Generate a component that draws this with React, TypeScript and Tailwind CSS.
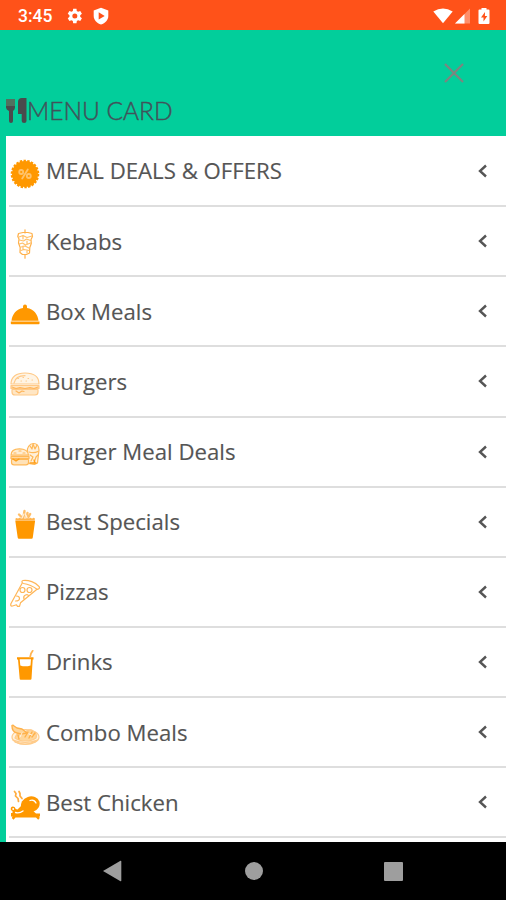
import type { ReactNode } from 'react'

type IconProps = { children: ReactNode }

function MenuIcon({ children }: IconProps) {
  return (
    <svg className="mt-[5px] h-[30px] w-[30px] shrink-0 text-[#ff9800]" viewBox="0 0 30 30" fill="none" stroke="currentColor" strokeWidth="1.2" strokeLinecap="round" strokeLinejoin="round">
      {children}
    </svg>
  )
}

function OffersIcon() {
  return (
    <MenuIcon>
      <circle cx="15" cy="15" r="13" fill="currentColor" stroke="none" />
      <circle cx="15" cy="15" r="13.2" strokeWidth="2.200" strokeLinecap="butt" strokeDasharray="2.4 1.37" />
      <g stroke="#ffc36b" strokeWidth="1.8">
        <circle cx="11.2" cy="13" r="2" />
        <circle cx="18.8" cy="17" r="2" />
        <path d="M17.8 10.500 12.200 19.500" />
      </g>
    </MenuIcon>
  )
}

function KebabIcon() {
  return (
    <MenuIcon>
      <path stroke="#ffb04a" d="M15 .8V4M8.5 4.5 13 3.5h5l4 1 .5 3-1.5 3 .3 4-1.5 4-.3 5.5-3 1.500h-4l-2.500-2 .2-5L8.500 14l.5-4L7.800 7.500zM15 26v3.200" />
      <path stroke="#ffc06a" d="m9 8 4-1.500 4 2 5-1.500M9.500 11l4 1 3-2 4 1.500M9.500 15l3-1 3 2 5-2M11 18l4-1 4 2M11 21.500l3-1 5 1M13 7v3m4 2v3m-4 2v3m4 1v3" />
    </MenuIcon>
  )
}

function BoxIcon() {
  return (
    <MenuIcon>
      <path fill="currentColor" stroke="none" d="M1.500 21.800c.6-6.500 5-11.700 11.500-12.800V7.400a2 2 0 1 1 4 0V9c6.500 1.100 11 6.300 11.500 12.800zM.8 22.500h28.700v2q0 .7-.8.700H1.600q-.8 0-.8-.7z" />
    </MenuIcon>
  )
}

function BurgerIcon() {
  return (
    <MenuIcon>
      <g stroke="#ffc987">
        <path fill="#fff4e4" d="M1 15C1 7.500 6.500 4 15 4s14 3.500 14 11z" />
        <path fill="#ffe6c4" d="M1 16.500h28v3H1zM2 20.500h26v2.500q0 3-3 3H5q-3 0-3-3z" />
        <path d="M4 14.200c1-5 5-7.500 11-7.500M8 9.500h.5M13 8.500h.5M18 9.500h.5M22 11h.5M11 12h.5M16 12h.5" />
        <path stroke="#ffb55a" d="m2 18 4 1.500 4-1 5 1 5-1 4 1 4-1.500M6 22l3 2 3-2 2 .5" />
      </g>
    </MenuIcon>
  )
}

function BurgerDealIcon() {
  return (
    <MenuIcon>
      <g stroke="#ffb857">
        <path fill="#fff0db" d="M17.500 13c-1-4 2-8.500 6-8.500 3.500 0 5.500 3 5.500 6.500l-1.500 13-3 1.500-6-1" />
        <path fill="#ffedd2" d="M1 16.200C1 12 4.500 9.800 9.500 9.800s9 2.200 9 6.400z" />
        <path fill="#ffd79f" d="M1 17.500h18v2H1z" />
        <path fill="#ffe2b8" d="M1.500 20.500h17v3q0 2.300-2.500 2.300H4q-2.500 0-2.500-2.300z" />
        <path d="m20 7 2 3 1-5 2 5 2-4M19 13c3 1 6 1 9-.5M20 16l3 2-2 4m3 2 2-6 2-2M4 14h2m3-2h2m2 2h2" />
        <path stroke="#ff9f18" strokeWidth="1.300" d="m3 20 3 2 3-2M20 24h6m-2-3 1 3" />
      </g>
    </MenuIcon>
  )
}

function SpecialsIcon() {
  return (
    <MenuIcon>
      <path fill="currentColor" stroke="none" d="M5.300 11.800h19.800l-2.300 16.700q-.1 1.200-1.300 1.200H9q-1.200 0-1.300-1.200z" />
      <path fill="#ffb44f" stroke="none" d="M5.500 9.500q1.500-1 2.500.2 1.500-1.800 3-.2 2-1.500 4 .2 2-1.700 4-.2 1.700-1.500 3 .2 1.500-1.500 2.800-.5v2.500H5.500z" />
      <path stroke="#ffbe69" strokeWidth="2.400" d="m11.500 8-2.500-2.500m4.500 2.500 1-6m2 6 1-4M18.500 8l1.700-3" />
      <path stroke="#fff0da" d="m12 9 2-4m3 4-1-3" />
    </MenuIcon>
  )
}

function PizzaIcon() {
  return (
    <MenuIcon>
      <g stroke="#ffb658">
        <path d="M13 1.500c5-.8 13 1.800 16.200 6.200.7 1.500-.4 3-2.200 2.500-4-3-8.500-5-13.500-5.700-2-.5-2-2.500-.5-3z" />
        <path d="M12 4.500 1 24.500q-1 3 1.500 2.500l4-1.200 1 1.500h2l1-3.500L27 10.300" />
        <circle cx="12.500" cy="11" r="2.500" />
        <circle cx="19.500" cy="11" r="2.500" />
        <path d="M6.500 17q3 0 3 2.500t-4 2.500M14 20q-1-3 1.500-4t3 1" />
      </g>
    </MenuIcon>
  )
}

function DrinkIcon() {
  return (
    <MenuIcon>
      <path fill="currentColor" stroke="none" fillRule="evenodd" d="M7 7.300h16.500V9.500h-.8L21.500 28.700q-.1 1-1 1H10.700q-1 0-1-1L8 9.500H7zm2.700 2 .6 6.200q5 1.700 10.200 0l.5-6.200z" />
      <path stroke="#ffb34f" strokeWidth="1.700" d="m20 7.500 1-4L22.700.8" />
    </MenuIcon>
  )
}

function ComboIcon() {
  return (
    <MenuIcon>
      <g stroke="#ffcb8a">
        <ellipse cx="15.500" cy="17" rx="13.500" ry="7.500" fill="#fff2df" />
        <path d="M3 20q12 5 24.500 0M5 22q10 4.500 21-.5" />
        <path fill="#ffd69b" d="M5 18c2-6 6-7 9-5 3-3 7-4 9-2 3 1 4 4 3 7-5 4-16 4-21 0z" />
        <path fill="#ffd69b" stroke="#ffb14a" strokeWidth="1.400" d="M2 5.500q1-1 2 .5l3 2 5 1 5 4-6 1-4-1Q2 12 2 6z" />
        <path stroke="#ffb14a" strokeWidth="1.400" d="m18 12-3 5m7-5-3 6m6-5-3 4M8 15l1 4" />
        <path stroke="#fff" strokeWidth=".8" d="m12 13-2 4m9-3 3 1" />
      </g>
    </MenuIcon>
  )
}

function ChickenIcon() {
  return (
    <MenuIcon>
      <ellipse cx="20.300" cy="14.500" rx="9.500" ry="8" transform="rotate(-18 20.300 14.500)" fill="currentColor" stroke="none" />
      <path fill="currentColor" stroke="none" d="M7.500 19.500 14 13l12 10.500h4v3h-1l.8 1.500-1.600 1.700-2.200-2.200H5.500l-2 2.200-1.700-1.700.8-1.500H1v-3.500h1.500v-2Q0 20 1 17.500q1.500-2 3.800-.3.5 2.300 2.700 2.300z" />
      <path stroke="#fff" strokeWidth="1.300" d="M20 10.500q4-1.500 6 2.500M5.500 22.500q4 1 7.500-1.500" />
      <circle cx="3.200" cy="19" r=".9" fill="#fff" stroke="none" />
      <path stroke="#ffad40" strokeWidth="1.700" d="m4.500 1.500 1.500 2-.5 2.500 2.500 2.500.5 3M9 1.500l1 2V6l2 2.500" />
    </MenuIcon>
  )
}

const menuItems = [
  { name: 'MEAL DEALS & OFFERS', icon: <OffersIcon /> },
  { name: 'Kebabs', icon: <KebabIcon /> },
  { name: 'Box Meals', icon: <BoxIcon /> },
  { name: 'Burgers', icon: <BurgerIcon /> },
  { name: 'Burger Meal Deals', icon: <BurgerDealIcon /> },
  { name: 'Best Specials', icon: <SpecialsIcon /> },
  { name: 'Pizzas', icon: <PizzaIcon /> },
  { name: 'Drinks', icon: <DrinkIcon /> },
  { name: 'Combo Meals', icon: <ComboIcon /> },
  { name: 'Best Chicken', icon: <ChickenIcon /> },
]

function StatusBar() {
  return (
    <div className="flex h-[30px] shrink-0 items-center bg-[#ff5219] pr-[16px] pl-[18px] pt-[1px] text-white">
      <span className="w-[46px] pt-[1px] font-['Roboto',sans-serif] text-[17.500px] font-medium">3:45</span>
      <svg className="h-[20px] w-[20px]" viewBox="0 0 24 24" fill="currentColor">
        <path d="M19.400 13c.1-.7.1-1.300 0-2l2.100-1.600-2-3.500-2.500 1-1.700-1L15 3.200h-4L10.600 6 9 6.900l-2.500-1-2 3.500L6.600 11q-.2 1 0 2l-2.100 1.600 2 3.500 2.500-1 1.600 1 .4 2.700h4l.4-2.700 1.600-1 2.500 1 2-3.500zM13 15a3 3 0 1 1 0-6 3 3 0 0 1 0 6z" />
      </svg>
      <svg className="ml-[9px] h-[18px] w-[16px]" viewBox="0 0 16 18">
        <path fill="currentColor" d="m8 .8 7.300 2.700v5.600c0 4-3 7.200-7.300 8.500-4.300-1.300-7.300-4.500-7.300-8.500V3.500z" />
        <path fill="#ff5219" d="m5.700 5.200 6 3.700-6 3.700z" />
      </svg>
      <svg className="ml-auto h-[16px] w-[20px]" viewBox="0 0 20 16" fill="currentColor">
        <path d="M.3 3.500q9.700-6 19.400 0L10 15.300z" />
      </svg>
      <svg className="ml-[2px] h-[16px] w-[15px]" viewBox="0 0 15 16" fill="currentColor">
        <path opacity=".35" d="M15 .5v15H0z" />
        <path d="M9.500 6v9.500H0z" />
      </svg>
      <svg className="ml-[8px] h-[18px] w-[12px]" viewBox="0 0 11 18">
        <path fill="currentColor" d="M3 1h5v1.500h2q1 0 1 1V16q0 1-1 1H1q-1 0-1-1V3.500q0-1 1-1h2z" />
        <path fill="#ff5219" d="M6.500 5 2.500 10.500H5V14.500L8.800 9H6.400z" />
      </svg>
    </div>
  )
}

function NavBar() {
  return (
    <div className="flex h-[58px] shrink-0 items-center justify-between bg-black pr-[103px] pl-[102px] text-[#9e9e9e]">
      <svg className="h-[22px] w-[20px]" viewBox="0 0 20 22" fill="currentColor">
        <path d="M1 11 18.500.800q.8-.3.800.600v19.200q0 .9-.8.600z" />
      </svg>
      <div className="ml-[1px] h-[18px] w-[18px] rounded-full bg-[#9e9e9e]" />
      <div className="h-[19px] w-[19px] rounded-[1px] bg-[#9e9e9e]" />
    </div>
  )
}

export default function App() {
  return (
    <div className="flex h-[900px] w-[506px] flex-col overflow-hidden bg-[#02ce9b]">
      <StatusBar />
      <header className="flex h-[106px] shrink-0 flex-col justify-between pl-[6px]">
        <button className="mt-[33px] mr-[42px] self-end text-[#7d857f]">
          <svg className="h-[20px] w-[20px]" viewBox="0 0 20 20" fill="none" stroke="currentColor" strokeWidth="2.200">
            <path d="m1 1 18 18M19 1 1 19" />
          </svg>
        </button>
        <h1 className="mb-[10px] flex h-[30px] items-center font-['Lato',sans-serif] text-[24.500px] font-light text-[#41525a] [-webkit-text-stroke:0.450px_#41525a]">
          <svg className="h-[26px] w-[21px]" viewBox="0 0 21 26">
            <path fill="#50725f" d="M0 1h9v8H0z" />
            <path fill="#4a4a4c" d="M0 8h9v1.500q0 2-2 3.500v10q0 2-2 2t-2-2V13q-3-1.500-3-3.500zM20.500 0v23q0 2-2.400 2t-2.400-2v-7h-3.700V4q0-4 4-4z" />
          </svg>
          <span>MENU CARD</span>
        </h1>
      </header>
      <main className="ml-[6px] h-[706px] shrink-0 overflow-hidden bg-white pt-[1px] pl-[3px]">
        {menuItems.map((item) => (
          <div key={item.name} className="flex h-[70.150px] items-center border-b-2 border-[#dedede] pr-[19px] pl-[1px]">
            {item.icon}
            <span className="ml-[6px] font-['Open_Sans',sans-serif] text-[22.200px] text-[#555] [-webkit-text-stroke:0.150px_#555]">{item.name}</span>
            <svg className="ml-auto h-[14px] w-[9px]" viewBox="0 0 9 14" fill="none" stroke="#555" strokeWidth="2.400">
              <path d="M8 1.500 2 7l6 5.500" />
            </svg>
          </div>
        ))}
      </main>
      <NavBar />
    </div>
  )
}
